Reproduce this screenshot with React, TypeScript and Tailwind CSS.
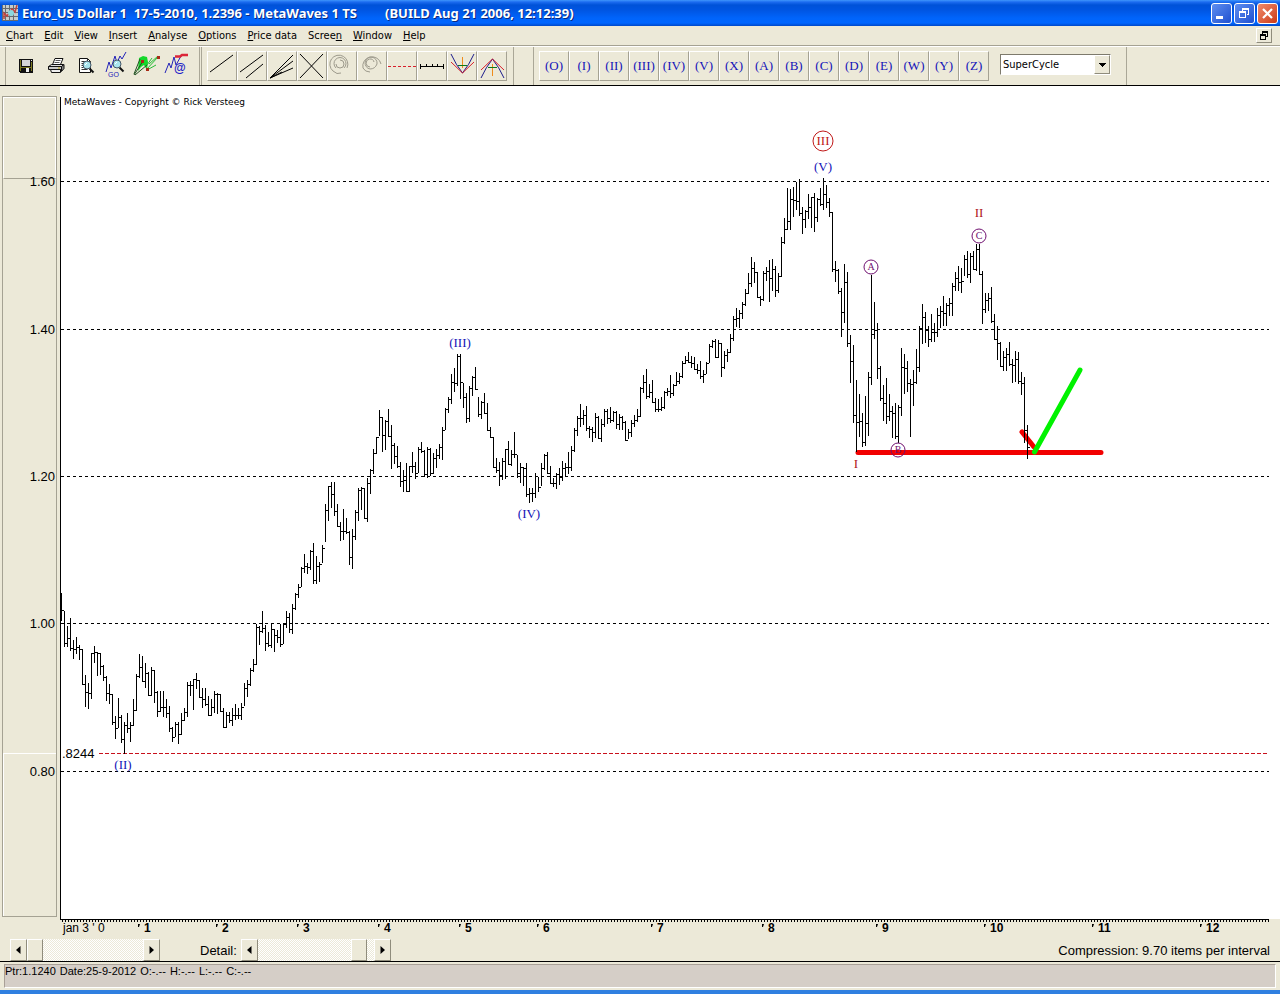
import React from "react";

type Segment = { base: number; bars: string };

// Each bar is "high:low:close", in thirds of a pixel below the segment's base level.
const SEGMENTS: Segment[] = [
  {
    base: 474,
    bars: `100:182:150 153:260:250 198:260:235 175:273:265 240:297:268 232:283:262 255:300:268 267:374:372
    345:440:397 370:446:400 283:418:280 258:310:275 275:347:280 278:345:318 315:362:350 348:422:398
    373:433:403 402:494:485 468:536:503 415:505:470 465:548:536 487:583:495 460:520:503 485:547:495
    418:497:450 342:452:347 282:355:322 288:365:362 310:385:338 335:407:405 321:407:330 330:428:397
    393:470:452 393:455:440 393:470:440 418:473:458 438:515:503 500:545:530 487:530:493 487:553:523
    458:524:480 445:482:455 365:470:375 362:407:375 357:450:357 340:387:360 360:415:410 385:443:417
    385:437:433 408:467:466 418:467:440 393:460:402 400:463:402 402:455:452 445:505:500 457:505:465
    457:488:480 443:497:465 433:480:465 445:477:465 430:480:440 370:438:383 360:410:373 323:378:330
    298:335:313 193:315:200 198:255:212 153:220:205 195:272:250 215:262:255 193:265:207 208:277:225
    210:250:230 193:262:253 190:253:193 153:205:170 160:220:208 132:223:145 98:150:102 72:115:82 20:82:25`,
  },
  {
    base: 244,
    bars: `673:730:708 698:733:712 660:720:663 640:763:750 678:763:708 697:757:703 645:700:655 522:637:540
    468:572:468 455:535:492 455:557:543 522:590:588 577:633:602 537:630:602 565:613:605 603:705:682
    598:717:618 540:630:545 473:572:480 470:540:475 475:567:565 445:577:458 417:493:420 357:433:370
    320:373:322 240:318:262 262:367:315 270:360:272 237:320:317 285:418:345 340:403:378 348:415:408
    397:470:452 420:487:450 400:483:483 407:485:408 367:430:408 397:448:428 352:428:357 337:370:362
    360:440:432 352:445:357 353:437:430 370:433:383 358:413:375 342:387:350 292:390:300 235:300:238
    200:250:207 133:222:157 115:187:160 73:167:78 73:208:155 160:235:202 190:278:265 167:275:173
    137:198:140 112:180:178 200:262:252 213:268:215 190:253:250 220:302:300 290:325:322 320:415:412
    385:430:420 397:468:435 385:450:393 357:447:358 332:405:402 360:407:372 307:383:372 375:443:430
    400:460:410 412:467:415 400:500:492 473:520:490 475:515:490 428:505:438 440:485:470 400:468:415
    373:420:375 367:432:430 407:462:460 443:472:460 430:478:433 415:465:440 393:452:413 398:440:410
    365:433:410 348:422:360 295:367:300 257:317:265 222:290:265 240:285:255 228:303:293 288:323:297
    290:335:307 250:323:260 257:325:323 267:337:283 238:290:243 238:283:265`,
  },
  {
    base: 154,
    bars: `502:550:540 513:545:515 513:567:553 522:570:530 528:570:545 543:602:600 567:598:575 540:592:548
    525:560:540 508:545:527 442:530:445 405:460:425 388:478:468 433:475:455 420:488:487 473:517:508
    477:515:508 472:512:502 453:508:457 445:468:452 405:473:460 432:468:435 397:437:422 400:433:407
    363:413:370 347:373:360 337:370:367 348:385:370 350:390:388 372:403:390 363:418:408 390:430:403
    365:403:370 312:370:318 300:325:303 298:353:352 300:353:310 308:410:382 333:388:345 328:365:335
    282:340:295 228:303:238 205:262:235 210:263:220 187:238:192 148:197:160 100:163:130 52:140:83
    65:130:97 97:175:172 167:198:178 93:183:100 82:123:93 60:187:115 57:153:88 78:170:150 100:160:108`,
  },
  {
    base: 34,
    bars: `352:472:365 295:373:328 205:330:303 207:330:237 202:292:240 187:270:243 178:287:280 262:343:297
    270:325:273 222:297:262 232:323:230 218:337:292 235:305:237 205:258:252 175:270:222 195:265:247
    235:292:277 277:455:447 423:487:450 447:522:512 505:652:577 433:610:485 457:682:670 645:790:722
    675:908:885 780:995:905 822:952:902 880:982:967 828:977:908 757:948:770 465:795:643 547:658:630
    610:778:745 738:842:833 795:902:850 775:913:888 823:903:873 858:955:880 848:957:948 855:968:860
    685:887:740 702:823:743 722:815:790 777:950:793 750:857:787 688:793:740 617:755:625 552:673:590
    575:670:630 618:682:658 583:665:635 608:665:637 565:650:585 558:625:573 527:618:580 550:617:555
    535:588:550 490:588:497 457:513:473 438:512:487 445:520:483 405:468:418 393:475:463 400:488:408
    393:450:448 372:452:388 372:465:462 453:612:567 520:580:540 518:572:535 500:608:603 582:660:658
    618:720:670 667:740:738 693:752:710 685:753:703 667:737:733 717:790:735 693:785:718 695:793:783
    757:825:790 772:970:930 915:1018:982`,
  },
];

const FIRST_X = 61;
const STEP = 3;

function buildBars(): string {
  let index = 0;
  let d = "";
  for (const { base, bars } of SEGMENTS) {
    for (const bar of bars.trim().split(/\s+/)) {
      const [high, low, close] = bar.split(":").map((v) => Math.round(base + Number(v) / 3));
      const x = FIRST_X + index * STEP;
      d += `M${x + 0.5} ${high}V${low}M${x} ${close + 0.5}h3`;
      index += 1;
    }
  }
  return d;
}

const BARS = buildBars();

const LEVELS = [
  { y: 96, label: "1.60" },
  { y: 244, label: "1.40" },
  { y: 391, label: "1.20" },
  { y: 538, label: "1.00" },
  { y: 686, label: "0.80" },
];

const YEARS: [number, string][] = [
  [138, "1"], [216, "2"], [297, "3"], [378, "4"], [459, "5"], [537, "6"],
  [651, "7"], [762, "8"], [876, "9"], [984, "10"], [1092, "11"], [1200, "12"],
];

const MENUS: [string, string, string][] = [
  ["", "C", "hart"], ["", "E", "dit"], ["", "V", "iew"], ["", "I", "nsert"], ["", "A", "nalyse"],
  ["", "O", "ptions"], ["", "P", "rice data"], ["Scree", "n", ""], ["", "W", "indow"], ["", "H", "elp"],
];

const WAVES = ["O", "I", "II", "III", "IV", "V", "X", "A", "B", "C", "D", "E", "W", "Y", "Z"];

const raised = "border border-t-white border-l-white border-r-[#8f8c7c] border-b-[#8f8c7c] bg-[#ece9d8]";

function Magnifier() {
  return (
    <>
      <path d="M15.5 15.5l4 4" stroke="#111" strokeWidth="2" />
      <circle cx="13" cy="12" r="4" fill="#a9e4ee" stroke="#456" />
      <path d="M11 12l2-2" stroke="#fff" />
    </>
  );
}

function SaveIcon() {
  return (
    <svg width="24" height="26" shapeRendering="crispEdges">
      <path d="M5 6h14v14H6l-1-1z" fill="#111" />
      <path d="M8 7h8v6H8z" fill="#d6d6d6" />
      <path d="M6 7h1v11H6zM17 9h1v9h-1zM7 14h10v1H7z" fill="#7d7a22" />
      <path d="M12 15h3v4h-3zM17 7h1v1h-1z" fill="#eee" />
    </svg>
  );
}

function PrintIcon() {
  return (
    <svg width="24" height="26" fill="none" stroke="#111">
      <path d="M8.500 11.500l2.500-6h8l-2.500 6z" fill="#fff" />
      <path d="M11.500 7.500h5M10.500 9.500h5" stroke="#555" />
      <path d="M4.500 13.500l3-2h12l-2 2z" fill="#ddd" />
      <path d="M4.500 13.500h13v3h-13z" fill="#c9c9c9" />
      <path d="M17.500 13.500l2.500-2v4l-2.500 3z" fill="#888" />
      <path d="M6.500 16.500h10v3h-9z" fill="#eee" />
      <path d="M14 15h2" stroke="#b9a300" />
    </svg>
  );
}

function PreviewIcon() {
  return (
    <svg width="24" height="26" fill="none">
      <path d="M5.500 5.500h8l3 3v11h-11z" fill="#fff" stroke="#111" />
      <path d="M13.500 5.500v3h3M7.500 8.500h4M7.500 10.500h3M7.500 12.500h2M7.500 14.500h2M7.500 16.500h6" stroke="#333" />
      <Magnifier />
    </svg>
  );
}

function GoIcon() {
  return (
    <svg width="24" height="28" fill="none" className="shrink-0">
      <path d="M2 20l3-10 2 6 4-12 2 7 3-7 2 3 4-7" stroke="#2222b8" />
      <Magnifier />
      <text x="4" y="25" fontSize="7" fill="#2222b8" fontFamily="Liberation Sans, sans-serif">GO</text>
    </svg>
  );
}

function FanIcon() {
  return (
    <svg width="28" height="26" fill="none" className="shrink-0">
      <path d="M7 5l4-2 4 1 1 5-1 8-3-5-3 2-3 4z" fill="#15d82b" />
      <path d="M2 22L11 8M3 22l12-10M2 21L8 6" stroke="#215022" />
      <path d="M14 17L26 4M15 12l5-7M15 17l9-5M17 11l9-8" stroke="#27bd36" />
      <path d="M9 7h3v3H9zM14 15h3v3h-3zM25 3h3v3h-3z" fill="#a92b16" />
    </svg>
  );
}

function MailWaveIcon() {
  return (
    <svg width="26" height="26" fill="none" className="shrink-0">
      <path d="M2 20l4-10 2 5 3-11 2 8 5-9" stroke="#2222b8" />
      <path d="M12 3.500h5l2-1.500h6" stroke="#dc2638" strokeWidth="2.500" />
      <text x="11" y="19" fontSize="12" fill="#2222c8" fontFamily="Liberation Sans, sans-serif" fontWeight="bold">@</text>
    </svg>
  );
}

const DRAW_TOOLS: { name: string; art: React.ReactNode }[] = [
  { name: "Trend line", art: <path d="M3 21L26 4" /> },
  { name: "Parallel lines", art: <path d="M3 21L26 4M9 27L26 13" /> },
  { name: "Fan", art: <path d="M3 27L26 4M3 27L26 10M3 27L26 17M3 27l12-6" /> },
  { name: "Cross", art: <path d="M3 3L26 27M26 3L3 27" /> },
  {
    name: "Spiral left",
    art: <path d="M6 20A9 9 0 1 1 20 17M6 20Q10 24 14 22M9 17A6 6 0 1 1 17 17M9 13A4 4 0 1 0 13 9" stroke="#9d9a8c" />,
  },
  {
    name: "Spiral right",
    art: <path d="M24 13A9 9 0 1 0 6 17Q8 21 13 21M20 13A6 6 0 1 0 13 18Q18 18 20 13M17 11A4 4 0 1 0 13 16" stroke="#9d9a8c" />,
  },
  { name: "Horizontal level", art: <path d="M1 15.500h28" stroke="#d8202c" strokeDasharray="3 2" shapeRendering="crispEdges" /> },
  { name: "Time ruler", art: <path d="M3 15.500h24M3.500 13v5M9.500 13v3M15.500 13v3M20.500 13v3M26.500 13v5" shapeRendering="crispEdges" /> },
  {
    name: "Valley projection",
    art: (
      <>
        <path d="M4 3Q9 14 15.500 22Q22 14 27 3" stroke="#1c1c8c" />
        <path d="M4 11l11.500 11L27 11" stroke="#d8202c" />
        <path d="M15.500 6v11" stroke="#ef8c1c" />
        <path d="M11 14.500h9" stroke="#0c7a1c" />
      </>
    ),
  },
  {
    name: "Peak projection",
    art: (
      <>
        <path d="M4 27Q9 16 15.500 8Q22 16 27 27" stroke="#1c1c8c" />
        <path d="M4 19L15.500 8L27 19" stroke="#d8202c" />
        <path d="M15.500 13v12" stroke="#ef8c1c" />
        <path d="M11 16.500h9" stroke="#0c7a1c" />
      </>
    ),
  },
];

function TitleBar() {
  const button = "flex size-[21px] items-center justify-center rounded-[3px] border border-white";
  return (
    <header className="flex h-[26px] items-center bg-[linear-gradient(#3f96fb_0,#1c6cf0_2px,#0052d8_5px,#0055e2_10px,#0064fb_18px,#0066ff_23px,#0048c8_26px)] pr-[2px] pl-[2px]">
      <svg width="16" height="16" fill="none">
        <path d="M0 0h16v16H0z" fill="#c5cccc" />
        <path d="M0 3.500h16M0 7.500h16M0 11.500h16M3.500 0v16M7.500 0v16M11.500 0v16M.5 0v16M0 15.500h16" stroke="#656b70" />
        <path d="M2 14V8l3 3 5-7 3 3 2-7" stroke="#c2433f" strokeWidth="1.500" />
        <circle cx="9" cy="8" r="3" fill="#8bd8df" />
      </svg>
      <h1 className="ml-1 flex gap-7 font-['Noto_Sans','Open_Sans',sans-serif] text-[13px] leading-4 font-bold whitespace-pre text-white [text-shadow:1px_1px_0_#0a2a80]">
        <span>Euro_US Dollar 1  17-5-2010, 1.2396 - MetaWaves 1 TS</span>
        <span>(BUILD Aug 21 2006, 12:12:39)</span>
      </h1>
      <div className="ml-auto flex gap-[2px]">
        <button aria-label="Minimize" className={`${button} bg-linear-to-br from-[#5f8ef0] to-[#1f4fd0]`}>
          <svg width="19" height="19"><path d="M4 12h7v3H4z" fill="#fff" /></svg>
        </button>
        <button aria-label="Restore" className={`${button} bg-linear-to-br from-[#5f8ef0] to-[#1f4fd0]`}>
          <svg width="19" height="19" fill="none" stroke="#fff" shapeRendering="crispEdges">
            <path d="M7 4.500h7M7 5.500h7M13.500 5v6M7.500 5v2M12 10.500h2M4 8.500h7M4.500 7.500h6v6h-6z" />
          </svg>
        </button>
        <button aria-label="Close" className={`${button} bg-linear-to-br from-[#ef8a6a] to-[#cc3710]`}>
          <svg width="19" height="19"><path d="M5 5l9 9M14 5l-9 9" stroke="#fff" strokeWidth="2.200" /></svg>
        </button>
      </div>
    </header>
  );
}

function MenuBar() {
  return (
    <nav className="flex h-[20px] items-center gap-[11px] border-b border-[#a5a293] pr-2 pl-[6px] text-[11px] leading-4">
      {MENUS.map(([before, key, after]) => (
        <button key={before + key + after} className="whitespace-pre">
          {before}<u>{key}</u>{after}
        </button>
      ))}
      <button aria-label="Restore document" className={`${raised} ml-auto flex h-[15px] w-4 items-center justify-center`}>
        <svg width="12" height="12" fill="none" stroke="#000" shapeRendering="crispEdges">
          <path d="M4 2h6M9.500 2v5M8 6.500h2M4.500 2v3M2 5h6M2.500 5v5M7.500 5v5M2 9.500h6" />
          <path d="M4 1.500h6M2 4.500h6" />
        </svg>
      </button>
    </nav>
  );
}

function Toolbar() {
  const divider = "w-px self-stretch bg-[#aaa797]";
  const tool = "flex size-[30px] items-center justify-center border-t border-l border-t-white border-l-white border-r border-b border-r-[#a5a293] border-b-[#a5a293]";
  return (
    <div className="flex h-[40px] items-center border-t border-b border-t-white border-b-black">
      <div className={`${divider} ml-[5px]`} />
      <div className="ml-[5px] flex w-[188px] items-center">
        {[
          ["Save", <SaveIcon />], ["Print", <PrintIcon />], ["Print preview", <PreviewIcon />],
          ["Go to wave", <GoIcon />], ["Analyse waves", <FanIcon />], ["Mail chart", <MailWaveIcon />],
        ].map(([name, icon]) => (
          <button key={name as string} aria-label={name as string} className="flex h-[30px] w-[30px] items-center justify-center">
            {icon}
          </button>
        ))}
      </div>
      <div className={divider} />
      <div className="ml-px w-px self-stretch bg-[#aaa797]" />
      <div className="ml-[5px] flex">
        {DRAW_TOOLS.map(({ name, art }) => (
          <button key={name} aria-label={name} className={tool}>
            <svg width="28" height="28" viewBox="1 1 28 28" fill="none" stroke="#000" className="shrink-0">{art}</svg>
          </button>
        ))}
      </div>
      <div className={`${divider} ml-[6px]`} />
      <div className={`${divider} ml-[19px]`} />
      <div className="ml-[5px] flex">
        {WAVES.map((wave) => (
          <button key={wave} className={`${tool} font-['Liberation_Serif',serif] text-[13px] leading-4 text-[#1414b8]`}>({wave})</button>
        ))}
      </div>
      <label className="mb-[3px] ml-[11px] grid w-[111px] border border-t-[#7d7a6c] border-r-white border-b-white border-l-[#7d7a6c] bg-white">
        <select
          aria-label="Wave degree"
          className="col-start-1 row-start-1 h-[19px] appearance-none bg-white pl-[2px] text-[11px] leading-4 outline-none"
          defaultValue="SuperCycle"
        >
          <option>SuperCycle</option>
          <option>Cycle</option>
          <option>Primary</option>
        </select>
        <span className={`${raised} pointer-events-none col-start-1 row-start-1 flex w-4 items-center justify-center justify-self-end`}>
          <svg width="7" height="4" shapeRendering="crispEdges"><path d="M0 0h7L3.500 4z" /></svg>
        </span>
      </label>
      <div className={`${divider} ml-[15px]`} />
    </div>
  );
}

function Mark({ x, y, text, color }: { x: number; y: number; text: string; color: string }) {
  return (
    <text x={x} y={y} textAnchor="middle" fontSize="13" fill={color} fontFamily="Liberation Serif, serif">{text}</text>
  );
}

function CircleMark({ x, y, r, text, size, color }: { x: number; y: number; r: number; text: string; size: number; color: string }) {
  return (
    <g>
      <circle cx={x} cy={y} r={r} fill="none" stroke={color} />
      <text x={x} y={y + Math.round(size / 3)} textAnchor="middle" fontSize={size} fill={color} fontFamily="Liberation Serif, serif">{text}</text>
    </g>
  );
}

function Chart() {
  return (
    <main className="grid flex-1 grid-cols-[60px_1fr] grid-rows-1">
      <div className="col-start-1 row-start-1 bg-[#ece9d8] pt-[10px] pr-[3px] pb-[2px] pl-[2px]">
        <div className="flex h-full flex-col border border-[#a5a293]">
          <div className="h-[82px] border-t border-r border-b border-l border-t-white border-r-white border-b-[#a5a293] border-l-white" />
          <div className="flex-1" />
          <div className="h-[163px] border-t border-l border-white" />
        </div>
      </div>
      <div className="col-start-2 row-start-1 bg-white" />
      <svg className="col-span-2 col-start-1 row-start-1 h-full min-h-[833px] w-full" role="img" aria-label="Euro / US Dollar price chart">
        <g fontFamily="Liberation Sans, sans-serif" fontSize="13">
          {LEVELS.map(({ y, label }) => (
            <text key={label} x="55" y={y + 4} textAnchor="end">{label}</text>
          ))}
          <text x="62" y="672">.8244</text>
        </g>
        <text x="64" y="19" fontSize="9" fontFamily="DejaVu Sans, sans-serif">MetaWaves - Copyright © Rick Versteeg</text>
        <g shapeRendering="crispEdges">
          <svg x="0" y="0" height="100%" className="w-[calc(100%-11px)]">
            {LEVELS.map(({ y }) => (
              <line key={y} x1="61" x2="100%" y1={y - 0.5} y2={y - 0.5} stroke="#000" strokeDasharray="3 3" />
            ))}
            <line x1="99" x2="100%" y1="667.500" y2="667.500" stroke="#c8101c" strokeDasharray="4 2" />
          </svg>
          <line x1="60.500" x2="60.500" y1="11" y2="100%" stroke="#000" />
        </g>
        <g strokeLinecap="round" strokeWidth="5">
          <path d="M858 366.500H1101M1022 346l12 15" stroke="#f20000" />
          <path d="M1034.500 366L1080 284" stroke="#00f200" />
        </g>
        <path d={BARS} fill="none" stroke="#000" shapeRendering="crispEdges" />
        <Mark x={123} y={683} text="(II)" color="#1414b8" />
        <Mark x={460} y={261} text="(III)" color="#1414b8" />
        <Mark x={529} y={432} text="(IV)" color="#1414b8" />
        <Mark x={823} y={85} text="(V)" color="#1414b8" />
        <Mark x={979} y={131} text="II" color="#b01420" />
        <Mark x={856} y={382} text="I" color="#b01420" />
        <CircleMark x={823} y={55} r={10} text="III" size={13} color="#c01818" />
        <CircleMark x={871} y={181} r={7} text="A" size={10} color="#701070" />
        <CircleMark x={979} y={150} r={7} text="C" size={10} color="#701070" />
        <CircleMark x={898} y={364} r={7} text="B" size={10} color="#701070" />
      </svg>
    </main>
  );
}

function TimeAxis() {
  return (
    <svg className="h-[18px] w-full shrink-0" role="img" aria-label="Time axis">
      <g shapeRendering="crispEdges">
        <svg height="4" className="w-[calc(100%-11px)]">
          <line x1="60" x2="100%" y1=".5" y2=".5" stroke="#000" />
          <line x1="62" x2="100%" y1="2" y2="2" stroke="#000" strokeWidth="2" strokeDasharray="1 2" />
        </svg>
      </g>
      <g fontFamily="Liberation Sans, sans-serif" fontSize="12">
        <text x="63" y="13">jan 3 ' 0</text>
        <g fontWeight="bold">
          {YEARS.map(([x, label]) => (
            <React.Fragment key={label}>
              <path d={`M${x} 5h2l-1 3h-1z`} />
              <text x={x + 6} y="13">{label}</text>
            </React.Fragment>
          ))}
        </g>
      </g>
    </svg>
  );
}

function Arrow({ dir, label }: { dir: "left" | "right"; label: string }) {
  return (
    <button aria-label={label} className={`${raised} flex h-[22px] w-[17px] items-center justify-center`}>
      <svg width="5" height="8"><path d={dir === "left" ? "M4.500 0v8L0 4z" : "M.5 0v8L5 4z"} /></svg>
    </button>
  );
}

function ScrollBar({ label, value, width }: { label: string; value: number; width: string }) {
  return (
    <div className="flex">
      <Arrow dir="left" label={`${label} back`} />
      <input
        type="range"
        aria-label={label}
        defaultValue={value}
        className={`${width} h-[22px] appearance-none bg-[repeating-conic-gradient(#fff_0_25%,#ece9d8_0_50%)] bg-[length:2px_2px] [&::-webkit-slider-thumb]:h-[22px] [&::-webkit-slider-thumb]:w-4 [&::-webkit-slider-thumb]:appearance-none [&::-webkit-slider-thumb]:border [&::-webkit-slider-thumb]:border-t-white [&::-webkit-slider-thumb]:border-r-[#8f8c7c] [&::-webkit-slider-thumb]:border-b-[#8f8c7c] [&::-webkit-slider-thumb]:border-l-white [&::-webkit-slider-thumb]:bg-[#ece9d8]`}
      />
      <Arrow dir="right" label={`${label} forward`} />
    </div>
  );
}

export default function App() {
  return (
    <div className="flex min-h-screen flex-col bg-[#ece9d8] font-['DejaVu_Sans_Condensed','DejaVu_Sans',sans-serif] text-black">
      <TitleBar />
      <MenuBar />
      <Toolbar />
      <Chart />
      <TimeAxis />
      <div className="flex h-[25px] items-end border-b border-black pr-[10px] pl-[10px] font-['Liberation_Sans',sans-serif] text-[13px] leading-5">
        <ScrollBar label="Position" value={0} width="w-[116px]" />
        <span className="mr-[4px] ml-[40px]">Detail:</span>
        <ScrollBar label="Detail" value={93} width="w-[116px]" />
        <span className="ml-auto">Compression: 9.70 items per interval</span>
      </div>
      <footer className="border-b-4 border-[#2f7fe0] bg-[#ece9d8] px-1 pt-[2px] pb-[2px]">
        <div className="flex h-[24px] gap-1 border border-t-[#a9a097] border-r-white border-b-white border-l-[#a9a097] bg-[#d5cec7] font-['Liberation_Sans',sans-serif] text-[11px] leading-3">
          <span>Ptr:1.1240</span>
          <span>Date:25-9-2012</span>
          <span>O:-.--</span>
          <span>H:-.--</span>
          <span>L:-.--</span>
          <span>C:-.--</span>
        </div>
      </footer>
    </div>
  );
}
